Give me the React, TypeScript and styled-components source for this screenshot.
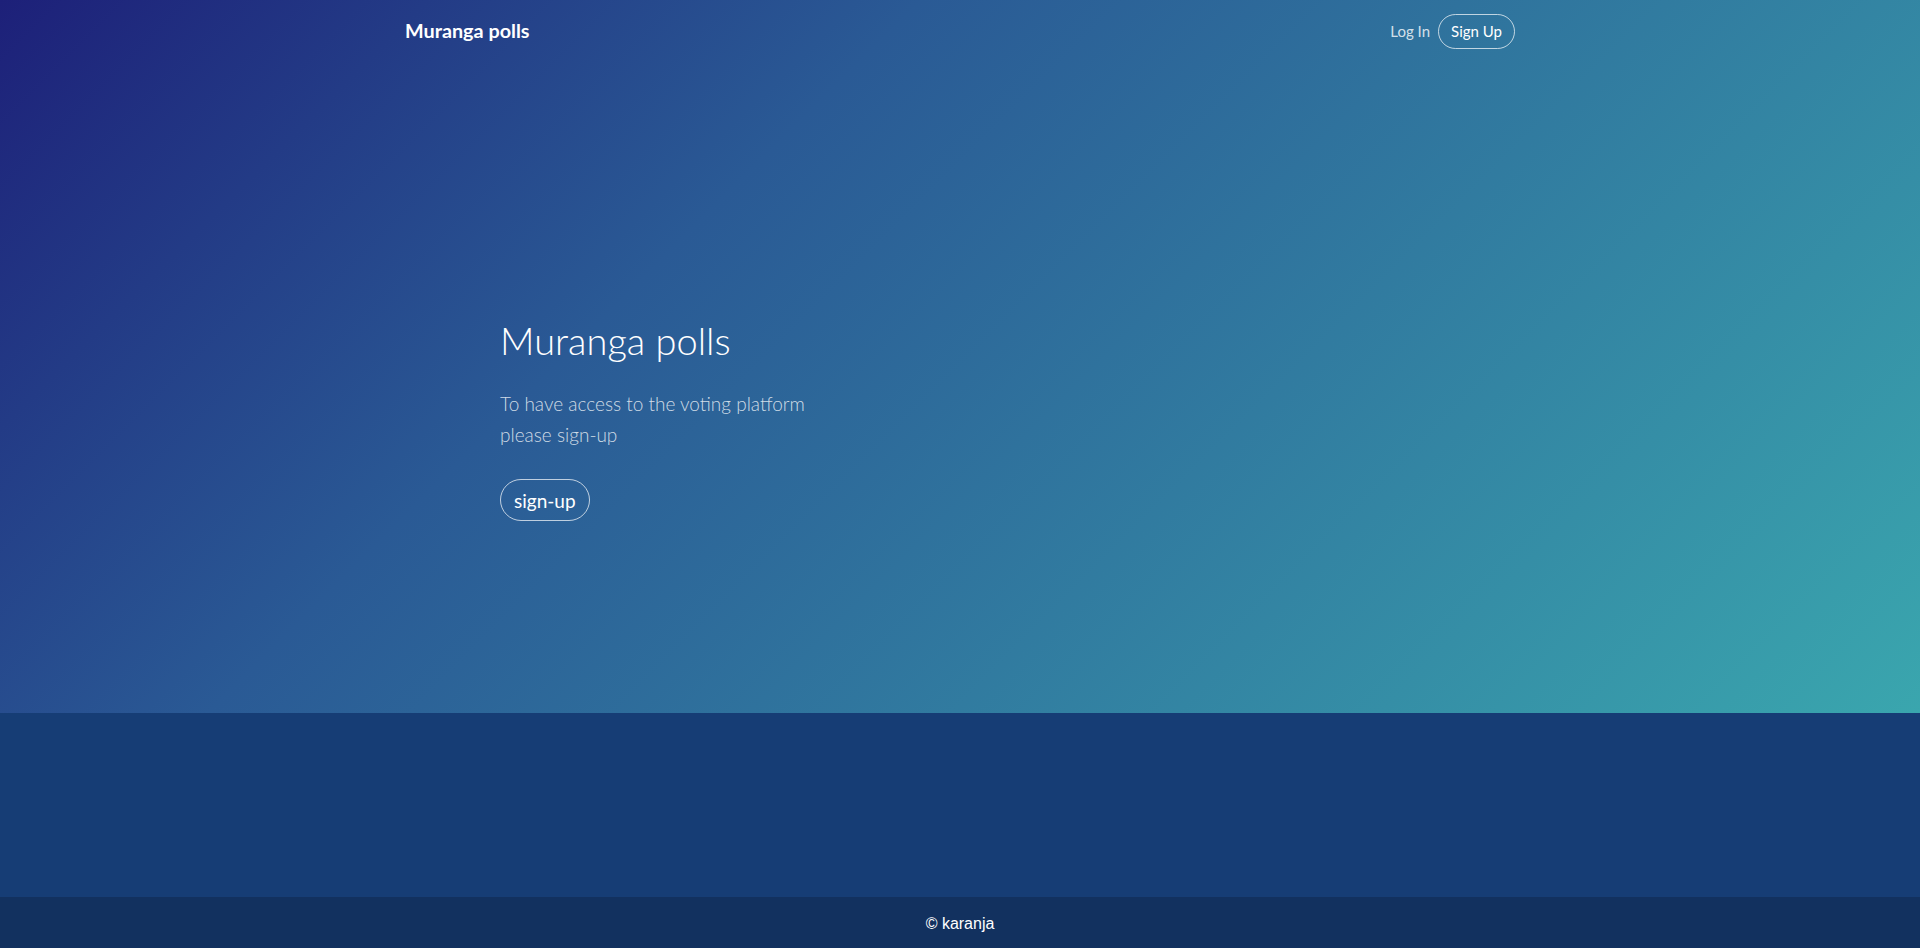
import React from "react";
import styled, { createGlobalStyle } from "styled-components";

const Global = createGlobalStyle`
  html, body { margin: 0; padding: 0; }
  body { font-family: Lato, "Open Sans", sans-serif; color: #fff; }
  * { box-sizing: border-box; }
`;

const Page = styled.div`
  display: flex;
  flex-direction: column;
  min-height: 948px;
`;

const Hero = styled.section`
  height: 713px;
  background: linear-gradient(135deg, #1d2079 0%, #2a5a95 35%, #3aa6ae 100%);
  display: flex;
  flex-direction: column;
`;

const Nav = styled.nav`
  width: 1110px;
  margin: 0 auto;
  height: 62px;
  display: flex;
  align-items: center;
  justify-content: space-between;
`;

const Brand = styled.a`
  font-family: Lato, sans-serif;
  font-weight: 700;
  font-size: 19.8px;
  color: #fff;
  text-decoration: none;
  margin-top: -2px;
`;

const NavLinks = styled.div`
  display: flex;
  align-items: center;
  gap: 8px;
`;

const NavLink = styled.a`
  font-size: 15px;
  color: rgba(255, 255, 255, 0.8);
  text-decoration: none;
`;

const PillButton = styled.a<{ $big?: boolean }>`
  display: inline-flex;
  align-items: center;
  justify-content: center;
  border: 1px solid rgba(255, 255, 255, 0.7);
  border-radius: 999px;
  color: #fff;
  text-decoration: none;
  font-size: ${(p) => (p.$big ? "19px" : "15px")};
  height: ${(p) => (p.$big ? "42px" : "35px")};
  padding: ${(p) => (p.$big ? "0 13px" : "0 12px")};
`;

const HeroBody = styled.div`
  width: 920px;
  margin: 0 auto;
  padding-top: 254px;
`;

const Title = styled.h1`
  margin: 0;
  font-weight: 300;
  font-size: 38px;
  line-height: 48px;
  color: #fff;
`;

const Lead = styled.p`
  margin: 24px 0 29px;
  width: 320px;
  font-weight: 300;
  font-size: 19px;
  line-height: 31px;
  color: rgba(255, 255, 255, 0.78);
`;

const Band = styled.section`
  height: 184px;
  background: #163d75;
`;

const Footer = styled.footer`
  height: 51px;
  padding-top: 3px;
  background: #12315f;
  display: flex;
  align-items: center;
  justify-content: center;
  font-family: "Liberation Sans", Arial, sans-serif;
  font-size: 16px;
  color: #fff;
`;

export default function App() {
  return (
    <Page>
      <Global />
      <Hero>
        <Nav>
          <Brand href="#">Muranga polls</Brand>
          <NavLinks>
            <NavLink href="#">Log In</NavLink>
            <PillButton href="#">Sign Up</PillButton>
          </NavLinks>
        </Nav>
        <HeroBody>
          <Title>Muranga polls</Title>
          <Lead>To have access to the voting platform please sign-up</Lead>
          <PillButton href="#" $big>
            sign-up
          </PillButton>
        </HeroBody>
      </Hero>
      <Band />
      <Footer>© karanja</Footer>
    </Page>
  );
}
